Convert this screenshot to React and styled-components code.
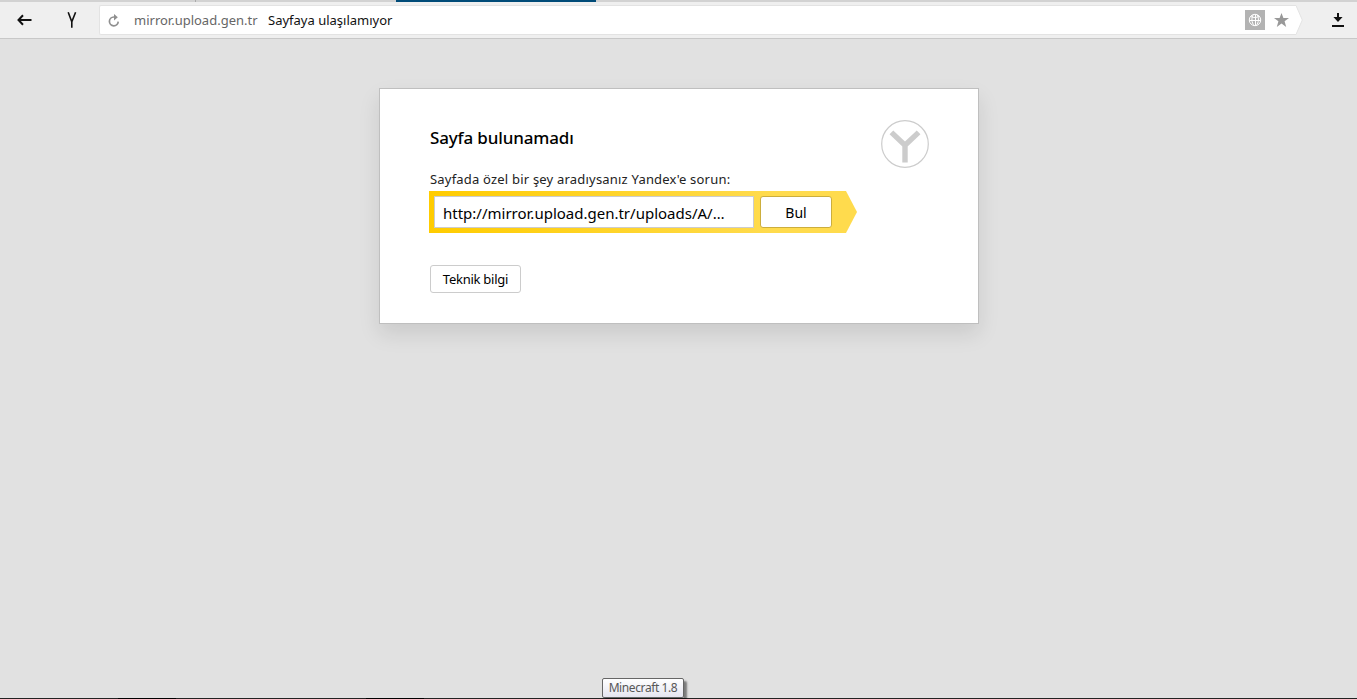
import React from 'react';
import styled, { createGlobalStyle } from 'styled-components';

function App() {
    return (
        <Screen>
            <GlobalStyle />
            <TabStrip>
                <TabDivider />
                <ActiveTab />
            </TabStrip>

            <Toolbar>
                <BackButton aria-label="Geri">
                    <svg width="16" height="12" viewBox="0 0 16 12">
                        <path d="M1.5 6H14.5M6 1.3L1.5 6L6 10.7" fill="none" stroke="#111" strokeWidth="2" />
                    </svg>
                </BackButton>
                <HomeButton aria-label="Yandex">
                    <svg width="10" height="16" viewBox="0 0 10 16">
                        <path d="M1.2 0.3L4.8 9.8L8.6 0.3M4.8 8.5V15.8" fill="none" stroke="#111" strokeWidth="1.6" />
                    </svg>
                </HomeButton>
                <Omnibox>
                    <Reload width="12" height="13" viewBox="0 0 12 13">
                        <path d="M7 3H5.8A4.4 4.4 0 1 0 10.2 7.6" fill="none" stroke="#8f8f8f" strokeWidth="1.7" />
                        <path d="M6 0L9.8 3.2L6 6.4z" fill="#8f8f8f" />
                    </Reload>
                    <Host>mirror.upload.gen.tr</Host>
                    <PageTitle>Sayfaya ulaşılamıyor</PageTitle>
                    <Protect>
                        <svg width="14" height="14" viewBox="0 0 14 14" fill="none" stroke="#fff" strokeWidth="1">
                            <circle cx="7" cy="7" r="5.7" />
                            <path d="M7.5 1.5V12.5M1.5 7.5H12.5M2.8 3.6C5.5 4.8 8.5 4.8 11.2 3.4M5.2 1.8C3.2 5 3.6 9.5 6 12.5M9.2 2C11.2 5 10.8 9.5 8.2 12.5" />
                        </svg>
                    </Protect>
                    <Star width="15" height="14" viewBox="0 0 15 14">
                        <path d="M7.5 0L9.4 5H15L10.6 8.3L12.2 14L7.5 10.6L2.8 14L4.4 8.3L0 5H5.6z" fill="#999" />
                    </Star>
                </Omnibox>
                <svg width="7" height="30" viewBox="0 0 7 30">
                    <path d="M0 0.5L6.3 15L0 29.5z" fill="#fff" />
                    <path d="M0 0.5L6.3 15L0 29.5" fill="none" stroke="#e3e3e3" />
                </svg>
                <Downloads aria-label="İndirilenler">
                    <svg width="12" height="14" viewBox="0 0 12 14" fill="#111">
                        <path d="M5 0H7V4H10.6L6 9L1.4 4H5zM0 12H12V14H0z" />
                    </svg>
                </Downloads>
            </Toolbar>

            <Content>
                <Card>
                    <Message>
                        <Heading>Sayfa bulunamadı</Heading>
                        <Hint>Sayfada özel bir şey aradıysanız Yandex'e sorun:</Hint>
                        <SearchArrow>
                            <Query>http://mirror.upload.gen.tr/uploads/A/…</Query>
                            <FindButton>Bul</FindButton>
                        </SearchArrow>
                        <DetailsButton>Teknik bilgi</DetailsButton>
                    </Message>
                    <svg width="48" height="48" viewBox="0 0 48 48">
                        <circle cx="24" cy="24" r="23.3" fill="none" stroke="#ccc" strokeWidth="1.2" />
                        <path d="M10.4 12.4L24 25.2L37.6 12.4M24 24V42.6" fill="none" stroke="#ccc" strokeWidth="5.4" />
                    </svg>
                </Card>
            </Content>

            <Taskbar />
            <Tooltip>Minecraft 1.8</Tooltip>
        </Screen>
    );
}

const GlobalStyle = createGlobalStyle`
  * {
    box-sizing: border-box;
  }
  body {
    margin: 0;
    overflow: hidden;
    font-family: "Noto Sans", "Open Sans", sans-serif;
    color: #000;
  }
  button {
    font-family: inherit;
    color: inherit;
    padding: 0;
  }
  svg {
    display: block;
    flex: none;
  }
`;

const Screen = styled.div`
  display: flex;
  flex-direction: column;
  width: 1357px;
  height: 699px;
  background: #e1e1e1;
`;

const TabStrip = styled.div`
  display: flex;
  height: 2px;
  background: #d2d2d2;
`;

const TabDivider = styled.div`
  width: 1px;
  margin-left: 195px;
  background: #aaa;
`;

const ActiveTab = styled.div`
  width: 200px;
  margin-left: 200px;
  background: #004b78;
`;

const Toolbar = styled.div`
  display: flex;
  height: 37px;
  padding-top: 3px;
  background: #efefef;
  border-bottom: 1px solid #c8c8c8;
`;

const IconButton = styled.button`
  display: flex;
  align-items: center;
  height: 30px;
  border: none;
  background: none;
`;

const BackButton = styled(IconButton)`
  width: 50px;
  padding-left: 17px;
`;

const HomeButton = styled(IconButton)`
  width: 49px;
  padding-left: 17px;
`;

const Omnibox = styled.div`
  display: flex;
  align-items: center;
  width: 1197px;
  height: 30px;
  background: #fff;
  border: 1px solid #e3e3e3;
  border-right: none;
  border-radius: 2px 0 0 2px;
  font-size: 13px;
  white-space: nowrap;
`;

const Reload = styled.svg`
  margin-left: 8px;
`;

const Host = styled.span`
  width: 134px;
  margin-left: 14px;
  color: #666;
`;

const PageTitle = styled.span`
  color: #111;
`;

const Protect = styled.div`
  display: flex;
  align-items: center;
  justify-content: center;
  width: 20px;
  height: 20px;
  margin-left: auto;
  background: #b3b3b3;
`;

const Star = styled.svg`
  margin: 0 7px 0 9px;
`;

const Downloads = styled(IconButton)`
  padding-left: 29px;
`;

const Content = styled.main`
  flex: 1;
  padding-top: 49px;
`;

const Card = styled.section`
  display: flex;
  justify-content: space-between;
  width: 600px;
  height: 236px;
  margin: 0 auto 0 379px;
  padding: 31px 49px 0 50px;
  background: #fff;
  border: 1px solid #bfbfbf;
  box-shadow: 0 10px 20px rgba(0, 0, 0, 0.1);
`;

const Message = styled.div`
  display: flex;
  flex-direction: column;
  align-items: flex-start;
  white-space: nowrap;
`;

const Heading = styled.h1`
  margin: 6px 0 0;
  font-size: 17px;
  font-weight: 500;
  line-height: 24px;
  letter-spacing: -0.15px;
`;

const Hint = styled.p`
  margin: 19px 0 0;
  font-size: 13px;
  line-height: 20px;
  letter-spacing: 0.2px;
  color: #222;
`;

const SearchArrow = styled.form`
  display: flex;
  gap: 6px;
  width: 428px;
  height: 42px;
  margin: 2px 0 0 -1px;
  padding: 5px;
  background: linear-gradient(to right, #ffcc00, #ffdb4d 80%);
  clip-path: polygon(0 0, 417px 0, 100% 50%, 417px 100%, 0 100%);
`;

const Query = styled.div`
  width: 320px;
  height: 32px;
  padding-left: 8px;
  background: #fff;
  border: 1px solid #ccc;
  font-size: 15px;
  line-height: 32px;
`;

const Button = styled.button`
  background: #fff;
  border: 1px solid #ccc;
  border-radius: 3px;
`;

const FindButton = styled(Button)`
  width: 72px;
  height: 32px;
  border-color: #ccae3d;
  font-size: 14px;
`;

const DetailsButton = styled(Button)`
  width: 91px;
  height: 28px;
  margin-top: 32px;
  font-size: 13px;
  letter-spacing: -0.25px;
`;

const Taskbar = styled.div`
  height: 1px;
  background: linear-gradient(to right, #222 0 118px, #000 118px 176px, #222 176px 366px, #000 366px 424px, #222 424px);
`;

/* Hovers over the taskbar edge */
const Tooltip = styled.div`
  position: absolute;
  left: 602px;
  top: 678px;
  width: 82px;
  height: 20px;
  border: 1px solid #666;
  border-radius: 2px;
  background: linear-gradient(#fff, #e5e5f0);
  box-shadow: 3px 3px 2px rgba(0, 0, 0, 0.45);
  color: #575757;
  font-size: 12px;
  letter-spacing: -0.4px;
  line-height: 18px;
  text-align: center;
  white-space: nowrap;
`;

export default App;
